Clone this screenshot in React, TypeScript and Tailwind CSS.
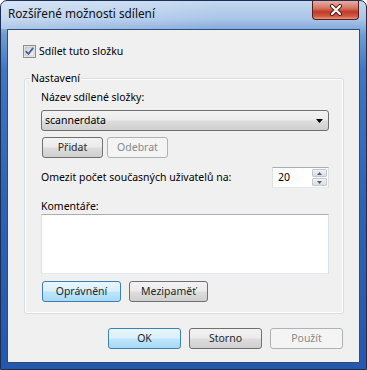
import React from "react";

const font = "font-['Segoe_UI','Noto_Sans',sans-serif]";

const btnBase =
  "h-[21px] rounded-[3px] border text-[10.5px] font-normal leading-none flex items-center justify-center antialiased";
const btnNormal =
  "border-[#707070] text-[#262626] bg-[linear-gradient(180deg,#f2f2f2_0%,#ebebeb_48%,#dddddd_52%,#cfcfcf_100%)]";
const btnDefault =
  "border-[#3c7fb1] text-[#262626] bg-[linear-gradient(180deg,#eaf6fd_0%,#d9f0fc_48%,#bee6fd_52%,#a7d9f5_100%)]";
const btnDisabled = "border-[#adb2b5] bg-[#f4f4f4] text-[#8a8a8a]";

function Btn({ label, kind = "normal", w }: { label: string; kind?: "normal" | "default" | "disabled"; w: string }) {
  const tone = kind === "default" ? btnDefault : kind === "disabled" ? btnDisabled : btnNormal;
  return <div className={`${btnBase} ${tone} ${w}`}>{label}</div>;
}

function CheckBox() {
  return (
    <svg width="13" height="13" viewBox="0 0 13 13">
      <defs>
        <linearGradient id="cb" x1="0" y1="0" x2="1" y2="1">
          <stop offset="0" stopColor="#cbcfd5" />
          <stop offset="1" stopColor="#f6f6f6" />
        </linearGradient>
      </defs>
      <rect x="0.5" y="0.5" width="12" height="12" fill="#f4f4f4" stroke="#8e8f8f" />
      <rect x="2" y="2" width="9" height="9" fill="url(#cb)" stroke="#aeb3b9" strokeWidth="0.6" />
      <path d="M3.2 6.6 L5.4 9 L9.8 3.4" fill="none" stroke="#4b5f99" strokeWidth="1.8" strokeLinejoin="round" strokeLinecap="round" />
    </svg>
  );
}

function CloseBox() {
  return (
    <div className="mr-[7px] flex h-[19px] w-[47px] items-center justify-center rounded-b-[4px] border border-t-0 border-[#5a1e18] bg-[linear-gradient(180deg,#e8ad9f_0%,#d47565_40%,#c13a27_60%,#cf5a44_85%,#e59a86_100%)]">
      <svg width="14" height="12" viewBox="0 0 14 12">
        <path d="M3 2 L11 10 M11 2 L3 10" stroke="#4a1a14" strokeWidth="4" strokeLinecap="round" />
        <path d="M3 2 L11 10 M11 2 L3 10" stroke="#ffffff" strokeWidth="2.2" strokeLinecap="round" />
      </svg>
    </div>
  );
}

function Spinner() {
  return (
    <div className="flex h-[21px] w-[57px] border border-[#abadb3] border-b-[#e3e9ef] border-x-[#dbdfe6] bg-white">
      <div className="flex flex-1 items-center pl-[5px]">20</div>
      <div className="flex w-[16px] flex-col gap-[1px] py-[1px] pr-[1px]">
        <div className="flex flex-1 items-center justify-center rounded-[1px] border border-[#c2c8d0] bg-[linear-gradient(180deg,#f3f3f3,#dcdcdc)]">
          <svg width="5" height="3" viewBox="0 0 5 3"><path d="M0 3 L2.5 0 L5 3Z" fill="#4d6185" /></svg>
        </div>
        <div className="flex flex-1 items-center justify-center rounded-[1px] border border-[#c2c8d0] bg-[linear-gradient(180deg,#f3f3f3,#dcdcdc)]">
          <svg width="5" height="3" viewBox="0 0 5 3"><path d="M0 0 L2.5 3 L5 0Z" fill="#4d6185" /></svg>
        </div>
      </div>
    </div>
  );
}

export default function App() {
  return (
    <div
      className={`${font} relative h-[370px] w-[367px] overflow-hidden rounded-t-[7px] border border-[#1b2f55] bg-[linear-gradient(180deg,#c3d7f0_0px,#a9c5e8_18px,#6f9bd3_34px,#3f76c2_70px,#2c63b5_200px,#2558ac_100%)] text-[#000]`}
    >
      <div className="flex h-[28px] items-start justify-between bg-[linear-gradient(100deg,rgba(255,255,255,0.35)_0%,rgba(255,255,255,0.15)_40%,rgba(255,255,255,0)_60%)]">
        <div className="pl-[7px] pt-[5px] text-[11.8px] leading-[15px] text-[#101010]">Rozšířené možnosti sdílení</div>
        <CloseBox />
      </div>

      <div className="mx-[6px] h-[334px] border border-[#2b4e80] bg-[#f0f0f0] text-[10.5px]">
        <div className="ml-[15px] mt-[14px] flex h-[15px] items-center gap-[3px]">
          <CheckBox />
          <span>Sdílet tuto složku</span>
        </div>

        <div className="relative ml-[16px] mt-[19px] h-[236px] w-[320px] rounded-[3px] border border-[#d5dfe5] shadow-[inset_0_0_0_1px_#ffffff]">
          <div className="absolute -top-[8px] left-[5px] bg-[#f0f0f0] px-[1px] leading-[15px]">Nastavení</div>

          <div className="pl-[16px] pr-[14px]">
            <div className="mt-[11px] leading-[15px]">Název sdílené složky:</div>

            <div className="mt-[5px] flex h-[21px] items-center justify-between rounded-[3px] border border-[#707070] bg-[linear-gradient(180deg,#f2f2f2_0%,#ebebeb_48%,#dddddd_52%,#cfcfcf_100%)] pl-[3px] pr-[5px]">
              <span>scannerdata</span>
              <svg width="7" height="4" viewBox="0 0 7 4"><path d="M0 0 L7 0 L3.5 4Z" fill="#000" /></svg>
            </div>

            <div className="mt-[6px] flex gap-[4px] pl-[1px]">
              <Btn label="Přidat" w="w-[61px]" />
              <Btn label="Odebrat" kind="disabled" w="w-[61px]" />
            </div>

            <div className="mt-[9px] flex items-center justify-between">
              <span>Omezit počet současných uživatelů na:</span>
              <Spinner />
            </div>

            <div className="mt-[11px] leading-[15px]">Komentáře:</div>
            <div className="h-[60px] border border-[#abadb3] border-b-[#e3e9ef] border-x-[#dbdfe6] bg-white" />

            <div className="mt-[7px] flex gap-[8px] pl-[1px]">
              <Btn label="Oprávnění" kind="default" w="w-[79px]" />
              <Btn label="Mezipaměť" w="w-[79px]" />
            </div>
          </div>
        </div>

        <div className="mt-[14px] flex justify-end gap-[8px] pr-[16px]">
          <Btn label="OK" kind="default" w="w-[73px]" />
          <Btn label="Storno" w="w-[73px]" />
          <Btn label="Použít" kind="disabled" w="w-[73px]" />
        </div>
      </div>
    </div>
  );
}
